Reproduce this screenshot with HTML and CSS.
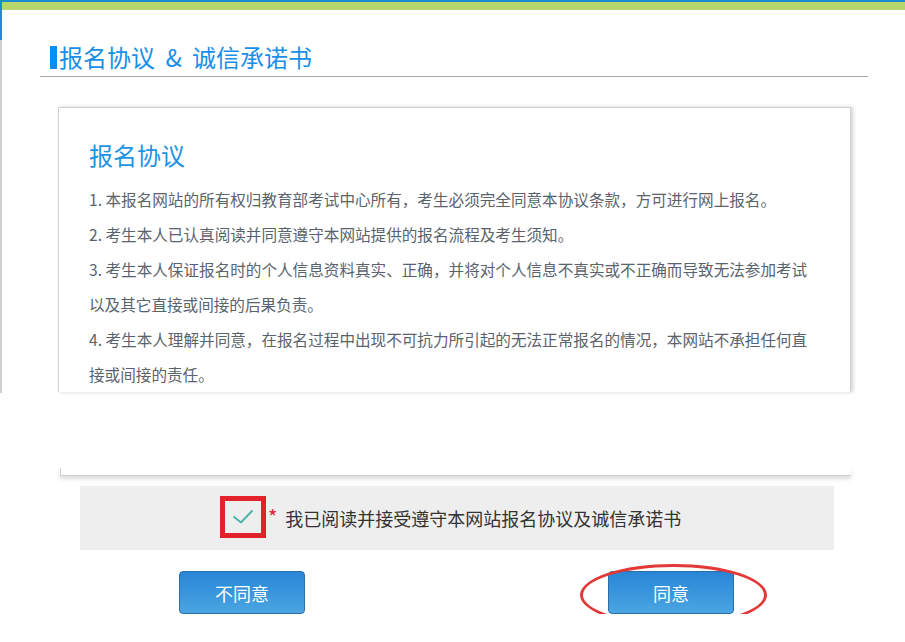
FILE: index.html
```html
<!DOCTYPE html>
<html lang="zh-CN">
<head>
  <meta charset="UTF-8">
  <meta name="viewport" content="width=device-width, initial-scale=1.0">
  <title>报名协议 &amp; 诚信承诺书</title>
  <link rel="stylesheet" href="styles.css">
</head>
<body>
  <div class="upper">
    <div class="rail"></div>
    <div class="main">
      <div class="topbar"></div>

      <h2 class="page-title"><span class="title-mark"></span>报名协议 &amp; 诚信承诺书</h2>

      <div class="agreement">
        <h3 class="agreement-title">报名协议</h3>
        <p class="clause">1. 本报名网站的所有权归教育部考试中心所有，考生必须完全同意本协议条款，方可进行网上报名。</p>
        <p class="clause">2. 考生本人已认真阅读并同意遵守本网站提供的报名流程及考生须知。</p>
        <p class="clause">3. 考生本人保证报名时的个人信息资料真实、正确，并将对个人信息不真实或不正确而导致无法参加考试以及其它直接或间接的后果负责。</p>
        <p class="clause">4. 考生本人理解并同意，在报名过程中出现不可抗力所引起的无法正常报名的情况，本网站不承担任何直接或间接的责任。</p>
      </div>
    </div>
  </div>

  <div class="agreement-tail"></div>
  <div class="agreement-foot"></div>

  <div class="confirm">
    <label class="check-box">
      <svg width="22" height="16" viewBox="0 0 22 16">
        <polyline points="1.5,7.5 9,13.5 20.5,1.5" fill="none" stroke="#4fb3a9" stroke-width="2"/>
      </svg>
    </label>
    <span class="required">*</span>
    <span class="confirm-text">我已阅读并接受遵守本网站报名协议及诚信承诺书</span>
  </div>

  <div class="actions">
    <button class="btn">不同意</button>
    <div class="btn-wrap">
      <button class="btn">同意</button>
      <span class="circle-mark"></span>
    </div>
  </div>
</body>
</html>
```

FILE: styles.css
```css
body {
  margin: 0;
  padding: 0;
  background: #fff;
  font-family: "Noto Sans CJK SC", "Noto Sans", sans-serif;
  color: #333;
}

.upper {
  display: flex;
  height: 393px;
}

.rail {
  width: 2px;
  flex-shrink: 0;
  background: linear-gradient(#1b8bd3 0, #1b8bd3 40px, #cfcfcf 40px);
}

.main {
  flex: 1;
  min-width: 0;
}

.topbar {
  height: 8px;
  border-top: 2px solid #1b8bd3;
  background: #b7d76c;
}

.page-title {
  margin: 31px 37px 0 38px;
  padding: 0 0 3px 10px;
  height: 32px;
  display: flex;
  align-items: center;
  border-bottom: 1px solid #a9a9a9;
  font-size: 24px;
  font-weight: normal;
  line-height: 32px;
  word-spacing: 5px;
  white-space: pre;
  color: #1a8fe6;
}

.title-mark {
  width: 7px;
  height: 23px;
  margin-right: 2px;
  background: #0a8ff0;
}

.agreement {
  margin: 30px 0 0 56px;
  width: 758px;
  height: 255px;
  padding: 29px 3px 0 30px;
  border: 1px solid #d2d2d2;
  border-bottom: none;
  box-shadow: 2px 0 4px rgba(0, 0, 0, 0.18);
  overflow: hidden;
}

.agreement-title {
  margin: 0 0 9px;
  font-size: 24px;
  font-weight: normal;
  line-height: 36px;
  color: #1e93e4;
}

.clause {
  margin: 0;
  width: 728px;
  font-size: 15.6px;
  line-height: 35px;
  color: #5a636d;
}

.agreement-tail {
  height: 75px;
}

.agreement-foot {
  margin-left: 60px;
  width: 790px;
  height: 7px;
  border-left: 1px solid #cfcfcf;
  border-bottom: 1px solid #cfcfcf;
  box-shadow: 0 3px 4px rgba(0, 0, 0, 0.14);
}

.confirm {
  margin: 10px 0 0 80px;
  width: 754px;
  height: 64px;
  padding-left: 140px;
  box-sizing: border-box;
  display: flex;
  align-items: center;
  background: #eeeeee;
}

.check-box {
  width: 36px;
  height: 32px;
  margin-top: -3px;
  border: 5px solid #e3212b;
  display: flex;
  align-items: center;
  justify-content: center;
}

.required {
  align-self: flex-start;
  margin: 21px 0 0 2px;
  font-size: 20px;
  line-height: 20px;
  color: #e3212b;
}

.confirm-text {
  margin-left: 8px;
  font-size: 18px;
  color: #333;
}

.actions {
  display: flex;
  gap: 303px;
  margin-top: 21px;
  padding-left: 179px;
}

.btn-wrap {
  position: relative;
}

.btn {
  width: 126px;
  height: 43px;
  border: 1px solid #2c6ea5;
  border-radius: 4px;
  background: linear-gradient(#2886d6, #4aa5e1);
  color: #fff;
  font-family: inherit;
  font-size: 18px;
  cursor: pointer;
}

.circle-mark {
  position: absolute;
  left: -28px;
  top: -7px;
  width: 181px;
  height: 56px;
  border: 3px solid #e23838;
  border-radius: 50%;
  pointer-events: none;
}
```
